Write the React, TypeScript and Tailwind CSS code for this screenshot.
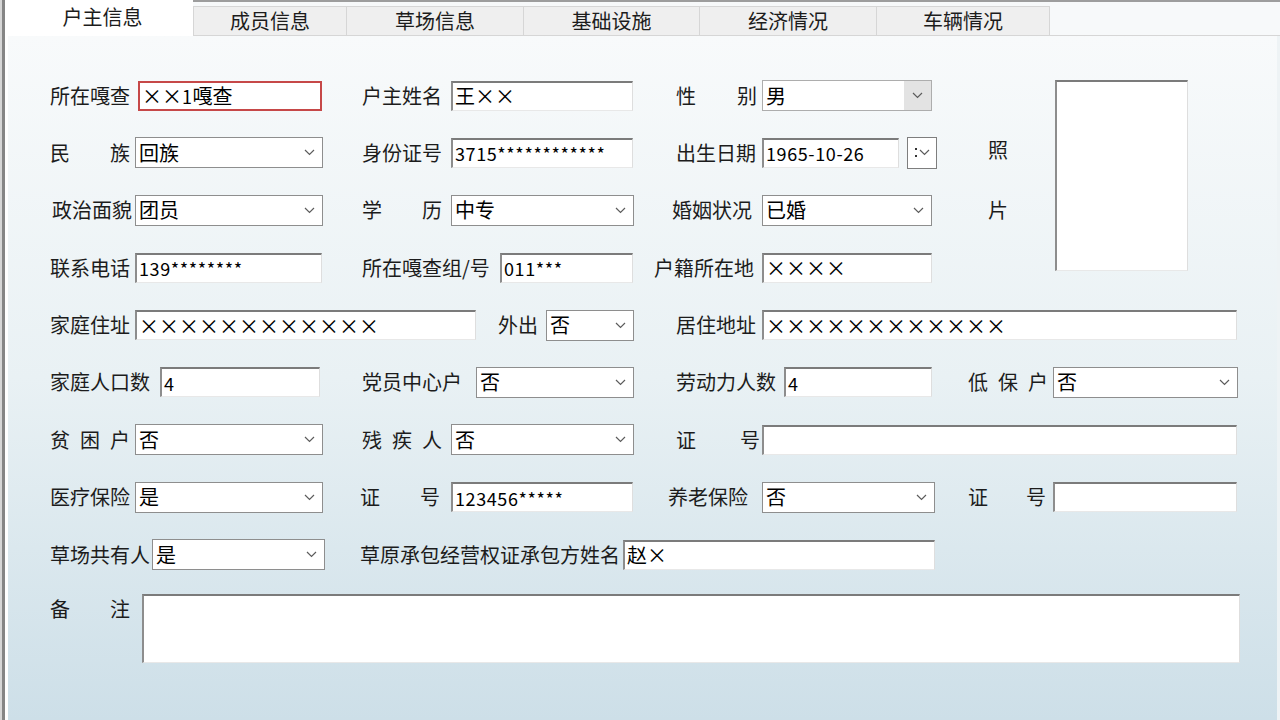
import React from 'react';

const sunken =
  'bg-white border-t-2 border-l-2 border-r border-b border-t-[#7b7b7b] border-l-[#8d8d8d] border-r-[#dedede] border-b-[#e8e8e8]';

function Val({ s }: { s: string }) {
  const parts = s.split(/(\*|×|[!-~]+)/).filter(Boolean);
  return (
    <span className="whitespace-nowrap">
      {parts.map((p, i) =>
        p === '*' ? (
          <span key={i} className="inline-block w-[9.8px] text-center text-[19px] relative top-[2px]">
            *
          </span>
        ) : /^[!-~]+$/.test(p) ? (
          <span key={i} className="text-[18px] tracking-[0.6px]">
            {p}
          </span>
        ) : p === '×' ? (
          <span key={i} className="inline-block w-[20px] text-center [font-feature-settings:'fwid']">
            ×
          </span>
        ) : (
          <span key={i}>{p}</span>
        )
      )}
    </span>
  );
}

function Chevron() {
  return (
    <svg width="11" height="7" viewBox="0 0 11 7" className="shrink-0">
      <path d="M1 1l4.5 4.5L10 1" fill="none" stroke="#5c5c5c" strokeWidth="1.2" />
    </svg>
  );
}

function Label({ className = '', t, spread }: { className?: string; t: string; spread?: boolean }) {
  return (
    <div
      className={`${className} shrink-0 text-[20px] leading-none text-[#1c1c1c] whitespace-nowrap ${
        spread ? 'flex justify-between' : ''
      }`}
    >
      {spread ? [...t].map((c, i) => <span key={i}>{c}</span>) : t}
    </div>
  );
}

function TextBox({ className = '', v = '', red }: { className?: string; v?: string; red?: boolean }) {
  return (
    <div
      className={`${className} shrink-0 h-[30px] flex items-center pl-[2px] overflow-hidden whitespace-nowrap text-[20px] leading-none text-black ${
        red ? 'bg-white border-2 border-[#c64848]' : sunken
      }`}
    >
      <Val s={v} />
    </div>
  );
}

function Combo({ className = '', v }: { className?: string; v: string }) {
  return (
    <div
      className={`${className} shrink-0 h-[31px] flex items-center justify-between bg-white border border-[#8e8e8e] pl-[3px] pr-[7px] text-[20px] leading-none text-black`}
    >
      <Val s={v} />
      <Chevron />
    </div>
  );
}

function Row({ children, className = '' }: { children: React.ReactNode; className?: string }) {
  return <div className={`flex items-center h-[31px] ${className}`}>{children}</div>;
}

const tabs = [
  { t: '成员信息', w: 'w-[154px] border-l' },
  { t: '草场信息', w: 'w-[177px]' },
  { t: '基础设施', w: 'w-[176px]' },
  { t: '经济情况', w: 'w-[177px]' },
  { t: '车辆情况', w: 'w-[173px]' },
];

export default function App() {
  return (
    <div className="w-[1280px] h-[720px] overflow-hidden flex bg-white font-['Noto_Sans_CJK_SC',sans-serif]">
      {/* window frame */}
      <div className="flex w-[8px] shrink-0">
        <div className="w-[2px] bg-[#d6d6d6]" />
        <div className="w-[3px] bg-[#858585]" />
        <div className="w-[3px] bg-white" />
      </div>

      <div className="flex-1 flex flex-col">
        {/* tab strip */}
        <div className="flex h-[36px] shrink-0">
          <div className="w-[185px] bg-white flex items-center justify-center pl-[4px] text-[20px] leading-none text-[#1c1c1c] pb-[2px]">
            户主信息
          </div>
          <div className="flex-1 flex flex-col border-t-2 border-[#9d9d9d] bg-[#f7f9fa]">
            <div className="flex-1 flex items-end pt-[4px] border-b border-[#d6d6d6]">
              {tabs.map((tab) => (
                <div
                  key={tab.t}
                  className={`${tab.w} h-[29px] flex items-center justify-center bg-[#efefef] border-t border-r border-[#d6d6d6] text-[20px] leading-none text-[#1c1c1c]`}
                >
                  {tab.t}
                </div>
              ))}
            </div>
          </div>
        </div>

        {/* form */}
        <div className="flex-1 bg-linear-to-b from-[#f8fafb] via-[#e9f1f4] to-[#cddfe8] border-r-[3px] border-r-[#eef3f5] pt-[44px] pl-[42px] flex flex-col gap-[26.4px]">
          <div className="flex items-start">
            <div className="flex flex-col gap-[26.4px]">
              <Row>
                <Label className="w-[80px]" t="所在嘎查" />
                <TextBox className="ml-[8px] w-[184px]" v="××1嘎查" red />
                <Label className="ml-[40px] w-[80px]" t="户主姓名" />
                <TextBox className="ml-[9px] w-[182px]" v="王××" />
                <Label className="ml-[43px] w-[81px]" t="性别" spread />
                <div className="ml-[5px] w-[170px] h-[31px] shrink-0 flex border border-[#adadad] bg-white text-[20px] leading-none">
                  <div className="flex-1 flex items-center pl-[3px]">男</div>
                  <div className="w-[27px] bg-[#e3e3e3] flex items-center justify-center">
                    <Chevron />
                  </div>
                </div>
              </Row>
              <Row>
                <Label className="w-[80px]" t="民族" spread />
                <Combo className="ml-[5px] w-[188px]" v="回族" />
                <Label className="ml-[39px] w-[80px]" t="身份证号" />
                <TextBox className="ml-[9px] w-[182px]" v="3715************" />
                <Label className="ml-[43px] w-[80px]" t="出生日期" />
                <TextBox className="ml-[6px] w-[137px]" v="1965-10-26" />
                <div className="ml-[8px] w-[30px] h-[32px] shrink-0 flex items-center justify-center gap-[2px] bg-white border border-[#7e7e7e]">
                  <span className="flex flex-col gap-[5px]">
                    <span className="w-[2px] h-[2px] bg-[#333]" />
                    <span className="w-[2px] h-[2px] bg-[#333]" />
                  </span>
                  <Chevron />
                </div>
              </Row>
              <Row>
                <Label className="ml-[2px] w-[80px]" t="政治面貌" />
                <Combo className="ml-[3px] w-[188px]" v="团员" />
                <Label className="ml-[39px] w-[80px]" t="学历" spread />
                <Combo className="ml-[9px] w-[183px]" v="中专" />
                <Label className="ml-[38px] w-[80px]" t="婚姻状况" />
                <Combo className="ml-[10px] w-[170px]" v="已婚" />
              </Row>
              <Row>
                <Label className="w-[80px]" t="联系电话" />
                <TextBox className="ml-[5px] w-[187px]" v="139********" />
                <Label className="ml-[40px] w-[132px]" t="所在嘎查组/号" />
                <TextBox className="ml-[6px] w-[133px]" v="011***" />
                <Label className="ml-[21px] w-[100px]" t="户籍所在地" />
                <TextBox className="ml-[8px] w-[170px]" v="××××" />
              </Row>
            </div>
            <div className="ml-[51px] w-[22px] pt-[60px] flex flex-col gap-[40px]">
              <Label t="照" />
              <Label t="片" />
            </div>
            <div className={`ml-[45px] w-[133px] h-[191px] shrink-0 ${sunken}`} />
          </div>

          <Row>
            <Label className="w-[80px]" t="家庭住址" />
            <TextBox className="ml-[5px] w-[341px]" v="××××××××××××" />
            <Label className="ml-[22px] w-[42px]" t="外出" />
            <Combo className="ml-[6px] w-[88px]" v="否" />
            <Label className="ml-[42px] w-[80px]" t="居住地址" />
            <TextBox className="ml-[6px] w-[475px]" v="××××××××××××" />
          </Row>
          <Row>
            <Label className="w-[100px]" t="家庭人口数" />
            <TextBox className="ml-[10px] w-[160px]" v="4" />
            <Label className="ml-[42px] w-[100px]" t="党员中心户" />
            <Combo className="ml-[14px] w-[158px]" v="否" />
            <Label className="ml-[42px] w-[100px]" t="劳动力人数" />
            <TextBox className="ml-[8px] w-[148px]" v="4" />
            <Label className="ml-[36px] w-[80px]" t="低保户" spread />
            <Combo className="ml-[5px] w-[185px]" v="否" />
          </Row>
          <Row>
            <Label className="w-[80px]" t="贫困户" spread />
            <Combo className="ml-[5px] w-[188px]" v="否" />
            <Label className="ml-[39px] w-[80px]" t="残疾人" spread />
            <Combo className="ml-[9px] w-[183px]" v="否" />
            <Label className="ml-[42px] w-[84px]" t="证号" spread />
            <TextBox className="ml-[2px] w-[475px]" v="" />
          </Row>
          <Row>
            <Label className="w-[80px]" t="医疗保险" />
            <Combo className="ml-[5px] w-[188px]" v="是" />
            <Label className="ml-[37px] w-[80px]" t="证号" spread />
            <TextBox className="ml-[11px] w-[182px]" v="123456*****" />
            <Label className="ml-[35px] w-[80px]" t="养老保险" />
            <Combo className="ml-[14px] w-[173px]" v="否" />
            <Label className="ml-[33px] w-[78px]" t="证号" spread />
            <TextBox className="ml-[7px] w-[184px]" v="" />
          </Row>
          <Row>
            <Label className="w-[100px]" t="草场共有人" />
            <Combo className="ml-[2px] w-[173px]" v="是" />
            <Label className="ml-[35px] w-[260px]" t="草原承包经营权证承包方姓名" />
            <TextBox className="ml-[3px] w-[312px]" v="赵×" />
          </Row>
          <div className="flex items-start -mt-[2.4px]">
            <Label className="mt-[5px] w-[80px]" t="备注" spread />
            <div className={`ml-[12px] w-[1098px] h-[69px] shrink-0 ${sunken}`} />
          </div>
        </div>
      </div>
    </div>
  );
}
